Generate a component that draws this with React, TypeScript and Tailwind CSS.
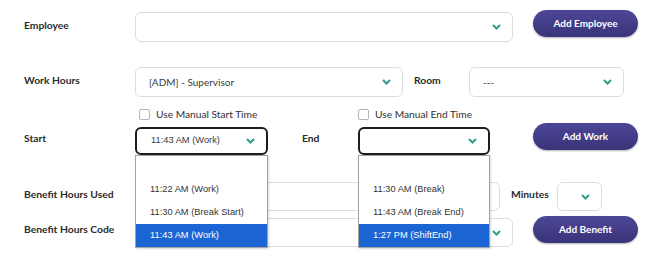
import { FC, ReactNode } from "react";

const Chevron: FC = () => (
  <svg width="9" height="6" viewBox="0 0 9 6" className="shrink-0">
    <polyline points="1,1 4.5,4.5 8,1" fill="none" stroke="#2f9c8c" strokeWidth="2" />
  </svg>
);

interface SelectProps {
  width: string;
  height?: string;
  value?: string;
  focused?: boolean;
  mono?: boolean;
  children?: ReactNode;
}

const Select: FC<SelectProps> = ({ width, height = "h-[30px]", value, focused, mono, children }) => (
  <div className={`relative ${width} ${height}`}>
    <div
      className={`flex h-full items-center justify-between bg-white pr-[11px] ${
        focused
          ? "rounded-[6px] border-2 border-[#1e1e1e] pl-[14px]"
          : "rounded-[6px] border border-[#dcdcdc] pl-[13px]"
      }`}
    >
      <span
        className={`text-[#3a3a3a] ${
          mono ? "font-['Liberation_Sans',sans-serif] text-[9.3px]" : "font-['Lato',sans-serif] text-[10px]"
        }`}
      >
        {value}
      </span>
      <Chevron />
    </div>
    {children}
  </div>
);

const Options: FC<{ items: string[]; selected: string }> = ({ items, selected }) => (
  <div className="absolute left-0 top-full z-10 flex w-full flex-col border border-[#a3a3a3] bg-white shadow-[1px_1px_2px_rgba(0,0,0,0.15)]">
    <div className="h-[22px]" />
    {items.map((item) => (
      <div
        key={item}
        className="flex h-[23px] items-center pl-[14px] font-['Liberation_Sans',sans-serif] text-[9.3px] text-[#333]"
      >
        {item}
      </div>
    ))}
    <div className="flex h-[23px] items-center bg-[#1a65d3] pl-[14px] font-['Liberation_Sans',sans-serif] text-[9.3px] text-white">
      {selected}
    </div>
  </div>
);

const Label: FC<{ children: ReactNode; className?: string }> = ({ children, className }) => (
  <span
    className={`font-['Lato',sans-serif] text-[10.3px] font-bold text-[#2b2b2b] ${className ?? ""}`}
  >
    {children}
  </span>
);

const Button: FC<{ children: ReactNode; className?: string }> = ({ children, className }) => (
  <button
    className={`h-[27px] w-[105px] rounded-full bg-gradient-to-b from-[#4c4697] to-[#3a347a] font-['Lato',sans-serif] text-[10px] font-bold text-white shadow-[0_1px_2px_rgba(0,0,0,0.3)] ${
      className ?? ""
    }`}
  >
    {children}
  </button>
);

const Check: FC<{ children: ReactNode }> = ({ children }) => (
  <div className="flex items-center gap-[6px]">
    <span className="h-[11px] w-[11px] rounded-[2px] border border-[#b5b5b5] bg-white" />
    <span className="font-['Lato',sans-serif] text-[10.2px] text-[#2f2f2f]">{children}</span>
  </div>
);

export default function App() {
  return (
    <div className="h-[271px] w-[670px] overflow-hidden bg-white pl-[24px]">
      <div className="mt-[12px] flex items-start">
        <Label className="mt-[6px] w-[111px]">Employee</Label>
        <Select width="w-[378px]" />
        <Button className="-mt-[2px] ml-[20px]">Add Employee</Button>
      </div>

      <div className="mt-[25px] flex items-start">
        <Label className="mt-[6px] w-[111px]">Work Hours</Label>
        <Select width="w-[268px]" value="[ADM] - Supervisor" />
        <Label className="ml-[11px] mt-[6px] w-[55px]">Room</Label>
        <Select width="w-[155px]" value="---" />
      </div>

      <div className="mt-[11px] flex h-[13px] items-center">
        <div className="ml-[115px] w-[219px]">
          <Check>Use Manual Start Time</Check>
        </div>
        <Check>Use Manual End Time</Check>
      </div>

      <div className="mt-[6px] flex items-start">
        <Label className="mt-[4px] w-[111px]">Start</Label>
        <Select width="w-[133px]" height="h-[28px]" value="11:43 AM (Work)" focused mono>
          <Options items={["11:22 AM (Work)", "11:30 AM (Break Start)"]} selected="11:43 AM (Work)" />
        </Select>
        <Label className="ml-[34px] mt-[4px] w-[56px]">End</Label>
        <Select width="w-[132px]" height="h-[28px]" focused>
          <Options items={["11:30 AM (Break)", "11:43 AM (Break End)"]} selected="1:27 PM (ShiftEnd)" />
        </Select>
        <Button className="-mt-[4px] ml-[43px]">Add Work</Button>
      </div>

      <div className="mt-[27px] flex items-start">
        <Label className="mt-[5px] w-[111px]">Benefit Hours Used</Label>
        <Select width="w-[365px]" height="h-[29px]" />
        <Label className="ml-[11px] mt-[5px] w-[46px]">Minutes</Label>
        <Select width="w-[45px]" height="h-[29px]" />
      </div>

      <div className="mt-[7px] flex items-start">
        <Label className="mt-[4px] w-[111px]">Benefit Hours Code</Label>
        <Select width="w-[378px]" height="h-[29px]" />
        <Button className="-mt-[2px] ml-[20px]">Add Benefit</Button>
      </div>
    </div>
  );
}
